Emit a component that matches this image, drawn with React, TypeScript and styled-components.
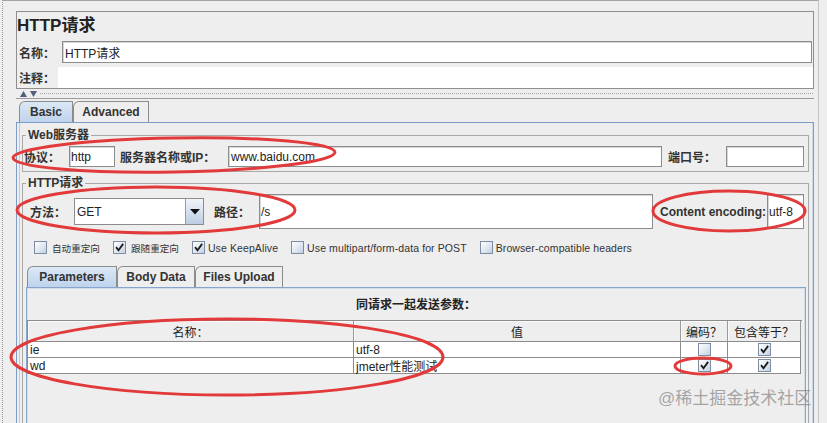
import React from "react";
import styled, { createGlobalStyle } from "styled-components";

const FONT = `"Liberation Sans", "Noto Sans CJK SC", sans-serif`;

const GlobalStyle = createGlobalStyle`
  html, body {
    margin: 0;
    padding: 0;
    background: #eeeeee;
  }
  * {
    box-sizing: border-box;
  }
`;

const Page = styled.div`
  position: relative;
  width: 827px;
  height: 423px;
  overflow: hidden;
  padding-left: 2px;
  background: #eeeeee;
  font-family: ${FONT};
  color: #333;
`;

const Frame = styled.div`
  width: 817px;
  height: 100%;
  border-left: 1px dotted #9a9a9a;
  border-top: 1px solid #a3a3a3;
  border-right: 1px solid #c4c4c4;
  padding: 10px 4px 0 13px;
`;

const TitleBox = styled.div`
  border: 1px solid #8f8f8f;
`;

const Title = styled.div`
  height: 27px;
  line-height: 27px;
  font-size: 17px;
  font-weight: bold;
  color: #222;
`;

const FieldRow = styled.div<{ $pr?: number; $pb?: number }>`
  display: flex;
  align-items: center;
  padding: 2px ${(p) => p.$pr ?? 0}px ${(p) => p.$pb ?? 2}px 0;
`;

const Label = styled.span<{ $w: number; $pl?: number }>`
  flex-shrink: 0;
  width: ${(p) => p.$w}px;
  padding-left: ${(p) => p.$pl ?? 0}px;
  font-size: 12px;
  font-weight: bold;
  white-space: nowrap;
  color: #333;
`;

const TextField = styled.div<{ $w?: number; $h: number; $pl?: number }>`
  display: flex;
  align-items: center;
  flex: ${(p) => (p.$w ? "0 0 auto" : "1")};
  width: ${(p) => (p.$w ? `${p.$w}px` : "auto")};
  height: ${(p) => p.$h}px;
  padding-left: ${(p) => p.$pl ?? 1}px;
  background: #fff;
  border: 1px solid #8c8c8c;
  box-shadow: inset 1px 1px 0 #d6d6d6;
  font-size: 12px;
  color: #222;
  white-space: nowrap;
  overflow: hidden;
`;

const CommentField = styled.div`
  flex: 1;
  height: 21px;
  background: #fff;
`;

const Divider = styled.div`
  display: flex;
  align-items: center;
  height: 9px;
  padding-left: 4px;
`;

const DottedLine = styled.div`
  flex: 1;
  margin: 0 1px 0 2px;
  border-top: 1px dotted #a6a6a6;
`;

const TabArea = styled.div`
  border-top: 1px solid #9b9b9b;
  padding-top: 2px;
`;

const TabRow = styled.div<{ $ml: number }>`
  display: flex;
  margin-left: ${(p) => p.$ml}px;
`;

const Tab = styled.div<{ $w: number; $active?: boolean }>`
  width: ${(p) => p.$w}px;
  height: 21px;
  display: flex;
  align-items: center;
  justify-content: center;
  border: 1px solid #8c8c8c;
  border-bottom: none;
  border-top-left-radius: 6px;
  background: ${(p) =>
    p.$active ? "linear-gradient(#dce8f6, #bed3ec)" : "#eeeeee"};
  font-size: 12px;
  font-weight: bold;
  color: #333;
`;

const BasicPanel = styled.div`
  height: 302px;
  border: 1px solid #7f9cc8;
  border-bottom: none;
  box-shadow: inset 2px 0 0 #eeeeee, inset 3px 0 0 #b9cbe5,
    inset -1px 0 0 #cddcf0;
  padding: 5px 4px 0 5px;
`;

const Group = styled.fieldset<{ $mt?: number; $pb?: number }>`
  margin: ${(p) => p.$mt ?? 0}px 0 0;
  padding: 0 4px ${(p) => p.$pb ?? 4}px 1px;
  border: 1px solid #a8a8a8;
  min-width: 0;
`;

const Legend = styled.legend`
  margin-left: 2px;
  padding: 0 2px;
  font-size: 12px;
  line-height: 14px;
  font-weight: bold;
  color: #333;
`;

const InputRow = styled.div<{ $h: number; $mt: number }>`
  display: flex;
  align-items: center;
  height: ${(p) => p.$h}px;
  margin-top: ${(p) => p.$mt}px;
`;

const Combo = styled.div`
  display: flex;
  flex-shrink: 0;
  width: 130px;
  height: 27px;
  border: 1px solid #8c8c8c;
  background: #fff;
`;

const ComboText = styled.div`
  flex: 1;
  display: flex;
  align-items: center;
  padding-left: 2px;
  font-size: 12px;
  color: #222;
`;

const ComboButton = styled.div`
  width: 18px;
  display: flex;
  align-items: center;
  justify-content: center;
  border-left: 1px solid #9a9a9a;
  background: linear-gradient(#f1f5fa, #bccde2);
`;

const CheckRow = styled.div`
  display: flex;
  align-items: center;
  gap: 13px;
  height: 13px;
  margin-top: 12px;
  padding-left: 10px;
`;

const CheckItem = styled.label<{ $cjk?: boolean }>`
  display: flex;
  align-items: center;
  gap: ${(p) => (p.$cjk ? 5 : 3)}px;
  font-size: ${(p) => (p.$cjk ? 9.6 : 10.5)}px;
  letter-spacing: ${(p) => (p.$cjk ? 0 : 0.1)}px;
  color: #333;
  white-space: nowrap;
`;

const Box = styled.span`
  display: inline-flex;
  align-items: center;
  justify-content: center;
  flex-shrink: 0;
  width: 13px;
  height: 13px;
  border: 1px solid #7f8da3;
  background: linear-gradient(135deg, #ffffff 0%, #dfe7f1 55%, #c3d1e3 100%);
`;

const SubTabs = styled.div`
  margin-top: 12px;
`;

const ParamPanel = styled.div`
  height: 140px;
  margin: 0 -2px 0 2px;
  border: 1px solid #88a3cc;
  border-bottom: none;
  box-shadow: inset 1px 1px 0 #d2dff1, inset -1px 0 0 #d2dff1;
`;

const ParamTitle = styled.div`
  height: 16px;
  margin: 9px 0 7px;
  line-height: 16px;
  text-align: center;
  font-size: 12px;
  font-weight: bold;
  color: #222;
`;

const Table = styled.div`
  display: grid;
  grid-template-columns: 326px 327px 47px 73px;
  margin-right: 3px;
  border-top: 1px solid #8c8c8c;
  border-left: 1px solid #8c8c8c;
`;

const HeadCell = styled.div`
  height: 21px;
  display: flex;
  align-items: center;
  justify-content: center;
  border-right: 1px solid #9a9a9a;
  border-bottom: 1px solid #8c8c8c;
  background: #eeeeee;
  box-shadow: inset 1px 1px 0 #fafafa;
  font-size: 12px;
  color: #222;
`;

const Cell = styled.div<{ $center?: boolean }>`
  height: 16px;
  display: flex;
  align-items: center;
  justify-content: ${(p) => (p.$center ? "center" : "flex-start")};
  padding-left: ${(p) => (p.$center ? 0 : 2)}px;
  border-right: 1px solid #8c8c8c;
  border-bottom: 1px solid #8c8c8c;
  background: #fff;
  font-size: 12px;
  color: #222;
  white-space: nowrap;
`;

const Watermark = styled.div`
  position: absolute;
  left: 658px;
  top: 388px;
  font-size: 17px;
  line-height: 22px;
  color: rgba(130, 130, 130, 0.7);
  font-family: ${FONT};
  white-space: nowrap;
`;

const Marks = styled.svg`
  position: absolute;
  left: 0;
  top: 0;
  pointer-events: none;
`;

const Check: React.FC<{ checked?: boolean }> = ({ checked }) => (
  <Box>
    {checked && (
      <svg width="9" height="9" viewBox="0 0 9 9">
        <path
          d="M1.6 4.8 L3.5 7.2 L7.6 1.6"
          fill="none"
          stroke="#1b1b1b"
          strokeWidth="1.8"
          strokeLinecap="square"
        />
      </svg>
    )}
  </Box>
);

const options = [
  { label: "自动重定向", checked: false, cjk: true },
  { label: "跟随重定向", checked: true, cjk: true },
  { label: "Use KeepAlive", checked: true, cjk: false },
  { label: "Use multipart/form-data for POST", checked: false, cjk: false },
  { label: "Browser-compatible headers", checked: false, cjk: false },
];

const params = [
  { name: "ie", value: "utf-8", encode: false, equals: true },
  { name: "wd", value: "jmeter性能测试", encode: true, equals: true },
];

export default function App() {
  return (
    <>
      <GlobalStyle />
      <Page>
        <Frame>
          <TitleBox>
            <Title>HTTP请求</Title>
            <FieldRow $pr={1}>
              <Label $w={45} $pl={2}>
                名称：
              </Label>
              <TextField $h={22} $pl={2}>
                HTTP请求
              </TextField>
            </FieldRow>
            <FieldRow $pb={0}>
              <Label $w={41} $pl={2}>
                注释：
              </Label>
              <CommentField />
            </FieldRow>
          </TitleBox>

          <Divider>
            <svg width="18" height="6" viewBox="0 0 18 6">
              <polygon points="0,6 3.5,0 7,6" fill="#4f5f7d" />
              <polygon points="10,0 17,0 13.5,6" fill="#4f5f7d" />
            </svg>
            <DottedLine />
          </Divider>

          <TabArea>
            <TabRow $ml={3}>
              <Tab $w={54} $active>
                Basic
              </Tab>
              <Tab $w={76}>Advanced</Tab>
            </TabRow>
            <BasicPanel>
              <Group>
                <Legend>Web服务器</Legend>
                <InputRow $h={21} $mt={4}>
                  <Label $w={45}>协议：</Label>
                  <TextField $w={46} $h={21}>
                    http
                  </TextField>
                  <Label $w={113} $pl={5}>
                    服务器名称或IP：
                  </Label>
                  <TextField $h={21} $pl={2}>
                    www.baidu.com
                  </TextField>
                  <Label $w={64} $pl={6}>
                    端口号：
                  </Label>
                  <TextField $w={78} $h={21} />
                </InputRow>
              </Group>

              <Group $mt={4} $pb={0}>
                <Legend>HTTP请求</Legend>
                <InputRow $h={35} $mt={4}>
                  <Label $w={50} $pl={6}>
                    方法：
                  </Label>
                  <Combo>
                    <ComboText>GET</ComboText>
                    <ComboButton>
                      <svg width="10" height="6" viewBox="0 0 10 6">
                        <polygon points="0,0 10,0 5,5.5" fill="#111" />
                      </svg>
                    </ComboButton>
                  </Combo>
                  <Label $w={55} $pl={10}>
                    路径：
                  </Label>
                  <TextField $h={35}>/s</TextField>
                  <Label $w={114} $pl={7}>
                    Content encoding:
                  </Label>
                  <TextField $w={37} $h={35}>
                    utf-8
                  </TextField>
                </InputRow>

                <CheckRow>
                  {options.map((o) => (
                    <CheckItem key={o.label} $cjk={o.cjk}>
                      <Check checked={o.checked} />
                      {o.label}
                    </CheckItem>
                  ))}
                </CheckRow>

                <SubTabs>
                  <TabRow $ml={3}>
                    <Tab $w={90} $active>
                      Parameters
                    </Tab>
                    <Tab $w={78}>Body Data</Tab>
                    <Tab $w={88}>Files Upload</Tab>
                  </TabRow>
                  <ParamPanel>
                    <ParamTitle>同请求一起发送参数：</ParamTitle>
                    <Table>
                      <HeadCell>名称：</HeadCell>
                      <HeadCell>值</HeadCell>
                      <HeadCell>编码？</HeadCell>
                      <HeadCell>包含等于？</HeadCell>
                      {params.map((p) => (
                        <React.Fragment key={p.name}>
                          <Cell>{p.name}</Cell>
                          <Cell>{p.value}</Cell>
                          <Cell $center>
                            <Check checked={p.encode} />
                          </Cell>
                          <Cell $center>
                            <Check checked={p.equals} />
                          </Cell>
                        </React.Fragment>
                      ))}
                    </Table>
                  </ParamPanel>
                </SubTabs>
              </Group>
            </BasicPanel>
          </TabArea>
        </Frame>

        <Watermark>@稀土掘金技术社区</Watermark>

        <Marks width="827" height="423" viewBox="0 0 827 423">
          <g fill="none" stroke="#e23a3a" strokeWidth="3">
            <ellipse cx="174" cy="155" rx="161" ry="17" transform="rotate(-1 174 155)" />
            <ellipse cx="156" cy="210" rx="139" ry="23" />
            <ellipse cx="729" cy="211" rx="76" ry="20" />
            <ellipse cx="227" cy="357" rx="216" ry="38" />
            <ellipse cx="703" cy="366" rx="28" ry="8" />
          </g>
        </Marks>
      </Page>
    </>
  );
}
